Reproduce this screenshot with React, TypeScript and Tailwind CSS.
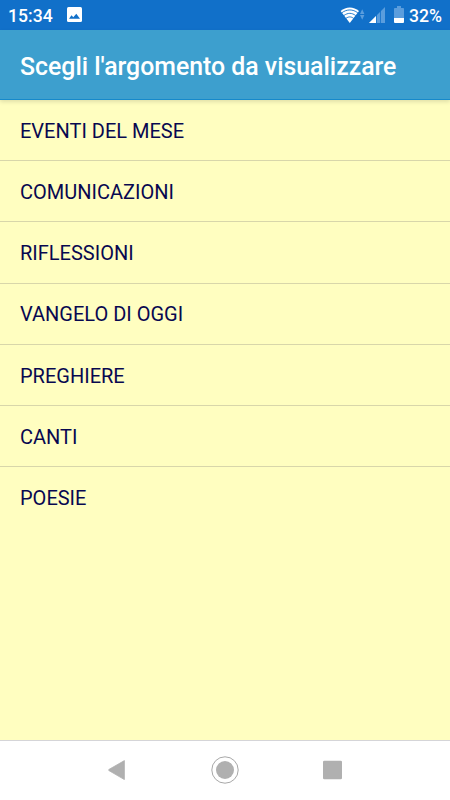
const topics = [
  'EVENTI DEL MESE',
  'COMUNICAZIONI',
  'RIFLESSIONI',
  'VANGELO DI OGGI',
  'PREGHIERE',
  'CANTI',
  'POESIE',
];

const WifiIcon = () => (
  <svg width="25" height="18" viewBox="0 0 25 18" fill="none">
    <path d="M0.6 5C6 0.3 13.6 0.3 19 5L9.8 17Z" fill="#fff" />
    <path d="M1.8 6.8C6.8 3 12.8 3 17.8 6.8M3.8 9.6C7.8 6.6 11.8 6.6 15.8 9.6M5.9 12.4C8.6 10.4 11 10.4 13.7 12.4" stroke="#1170c9" strokeWidth="0.9" />
    <path d="M22.2 3.2L24.4 8H20ZM22.2 13.8L20 9H24.4Z" fill="#5a9ddd" />
  </svg>
);

const SignalIcon = () => (
  <svg width="16" height="16" viewBox="0 0 16 16">
    <path d="M0 16L16 0V16Z" fill="#5a9ddd" />
    <path d="M0 16L7 9V16Z" fill="#fff" />
    <path d="M7.5 6V16M11.5 2V16" stroke="#1170c9" strokeWidth="0.8" />
  </svg>
);

const BatteryIcon = () => (
  <svg width="10" height="17" viewBox="0 0 10 17">
    <path d="M3 0H7V2H9.2Q10 2 10 2.8V12H0V2.8Q0 2 0.8 2H3Z" fill="#5a9ddd" />
    <path d="M0 12H10V16Q10 17 9 17H1Q0 17 0 16Z" fill="#fff" />
  </svg>
);

const StatusBar = () => (
  <div className="flex h-[30px] shrink-0 items-center justify-between bg-[#1170c9] px-2 text-[17.6px] font-medium text-white">
    <div className="flex items-center">
      <span className="w-[59px] pt-[3px]">15:34</span>
      <svg width="15" height="15" viewBox="0 0 15 15">
        <rect width="15" height="15" rx="1.5" fill="#fff" />
        <path d="M2 11.7L4.5 8.2L6.3 10.3L9.3 6.8L13 11.7Z" fill="#1170c9" />
      </svg>
    </div>
    <div className="flex items-center">
      <WifiIcon />
      <div className="ml-[4px]">
        <SignalIcon />
      </div>
      <div className="ml-[9px]">
        <BatteryIcon />
      </div>
      <span className="ml-[5px] pt-[3px]">32%</span>
    </div>
  </div>
);

const NavBar = () => (
  <nav className="flex h-[60px] shrink-0 items-center justify-center gap-[84px] border-t border-[#d5d5d8] bg-white pb-[2px]">
    <svg width="20" height="20" viewBox="0 0 20 20">
      <path d="M1.8 9.5L17.4 0.6V19.6L1.8 10.5Z" fill="#b0b0b0" stroke="#b0b0b0" strokeWidth="0.8" strokeLinejoin="round" />
    </svg>
    <svg width="28" height="28" viewBox="0 0 28 28">
      <circle cx="14" cy="14" r="13.2" fill="none" stroke="#a8a8a8" />
      <circle cx="14" cy="14" r="9" fill="#b0b0b0" />
    </svg>
    <svg width="20" height="20" viewBox="0 0 20 20">
      <rect x="0" y="0.7" width="19" height="18.6" rx="1.2" fill="#b0b0b0" />
    </svg>
  </nav>
);

export default function App() {
  return (
    <div className="flex h-screen flex-col overflow-hidden bg-[#fffec0] font-['Roboto',sans-serif]">
      <StatusBar />
      <header className="z-10 flex h-[70px] shrink-0 items-center border-b border-[#1689cb] bg-[#3d9fce] px-5 pt-[4px] shadow-[0_2px_4px_rgba(0,0,0,0.12)]">
        <h1 className="text-[24.85px] font-medium whitespace-nowrap text-white">Scegli l'argomento da visualizzare</h1>
      </header>
      <ul className="flex-1 text-[20px] text-[#080850]">
        {topics.map((topic) => (
          <li
            key={topic}
            className="flex h-[61.2px] items-center border-b border-[#d8d6aa] px-5 pt-[1.5px] last:border-b-0"
          >
            {topic}
          </li>
        ))}
      </ul>
      <NavBar />
    </div>
  );
}
